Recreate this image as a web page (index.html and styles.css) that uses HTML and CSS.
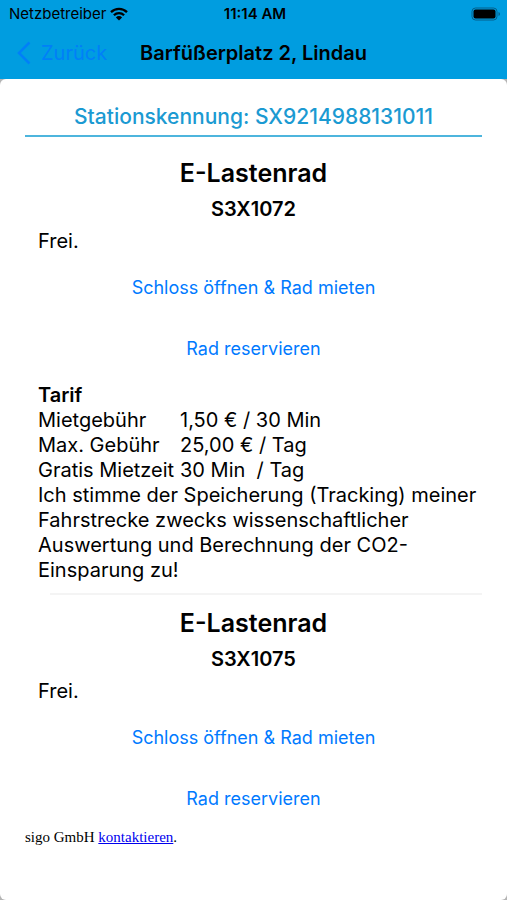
FILE: index.html
```
<!DOCTYPE html>
<html lang="de">
<head>
	<meta charset="utf-8">
	<meta name="viewport" content="width=device-width, initial-scale=1">
	<title>Barfüßerplatz 2, Lindau</title>
	<link rel="stylesheet" href="styles.css">
</head>
<body>
	<header>
		<div class="status-bar">
			<div class="carrier">
				<span>Netzbetreiber</span>
				<svg class="wifi" viewBox="0 0 18 14" aria-hidden="true">
					<path d="M1 5.2a11.5 11.5 0 0 1 16 0M3.9 8.2a7.3 7.3 0 0 1 10.2 0" fill="none" stroke="#000" stroke-width="2.3"/>
					<path d="M9 13.6 5.9 10.4a4.4 4.4 0 0 1 6.2 0z"/>
				</svg>
			</div>
			<span class="clock">11:14 AM</span>
			<svg class="battery" viewBox="0 0 30 14" aria-hidden="true">
				<rect x="1" y="1" width="25" height="12" rx="3.5" fill="none" stroke="#045f8a"/>
				<rect x="2.5" y="2.5" width="22" height="9" rx="2"/>
				<path d="M27.5 5v4q1.5-.6 1.5-2t-1.5-2z" fill="#045f8a"/>
			</svg>
		</div>
		<nav class="nav-bar">
			<button type="button" class="back">
				<svg viewBox="0 0 14 24" aria-hidden="true">
					<path d="M12.5 1.5 2 12l10.5 10.5" fill="none" stroke="currentColor" stroke-width="2.6"/>
				</svg>
				Zurück
			</button>
			<h1>Barfüßerplatz 2, Lindau</h1>
		</nav>
	</header>

	<main>
		<h2 class="station">Stationskennung: SX9214988131011</h2>

		<section class="bike">
			<h3>E-Lastenrad</h3>
			<h4>S3X1072</h4>
			<p class="state">Frei.</p>
			<button type="button" class="action">Schloss öffnen &amp; Rad mieten</button>
			<button type="button" class="action">Rad reservieren</button>
			<div class="tariff">
				<table>
					<caption>Tarif</caption>
					<tbody>
						<tr>
							<th scope="row">Mietgebühr</th>
							<td>1,50 € / 30 Min</td>
						</tr>
						<tr>
							<th scope="row">Max. Gebühr</th>
							<td>25,00 € / Tag</td>
						</tr>
						<tr>
							<th scope="row">Gratis Mietzeit</th>
							<td>30 Min&nbsp; / Tag</td>
						</tr>
					</tbody>
				</table>
				<p>Ich stimme der Speicherung (Tracking) meiner Fahrstrecke zwecks wissenschaftlicher Auswertung und Berechnung der CO2-Einsparung zu!</p>
			</div>
		</section>

		<section class="bike">
			<h3>E-Lastenrad</h3>
			<h4>S3X1075</h4>
			<p class="state">Frei.</p>
			<button type="button" class="action">Schloss öffnen &amp; Rad mieten</button>
			<button type="button" class="action">Rad reservieren</button>
		</section>

		<p class="contact">sigo GmbH <a href="#">kontaktieren</a>.</p>
	</main>
</body>
</html>
```

FILE: styles.css
```
* {
	box-sizing: border-box;
}
body {
	display: flex;
	flex-direction: column;
	min-height: 100vh;
	margin: 0;
	background: linear-gradient(#009de0 79px, #b4b4b4 79px);
	color: #000;
	font-family: Inter, "Liberation Sans", sans-serif;
	font-size: 20px;
	line-height: 25px;
}
h1, h2, h3, h4, p {
	margin: 0;
}
button {
	padding: 0;
	border: 0;
	background: none;
	color: #007aff;
	font-family: inherit;
	cursor: pointer;
}

/* Status bar and navigation */
.status-bar {
	display: grid;
	grid-template-columns: 1fr auto 1fr;
	align-items: center;
	height: 27px;
	padding: 0 6px 0 9px;
	font-size: 15px;
}
.carrier {
	display: flex;
	align-items: center;
	gap: 4px;
}
.wifi {
	width: 18px;
	height: 14px;
}
.clock {
	font-weight: 600;
}
.battery {
	justify-self: end;
	width: 30px;
	height: 14px;
}
.nav-bar {
	display: grid;
	grid-template-columns: 1fr auto 1fr;
	align-items: center;
	height: 52px;
	padding: 0 17px;
}
.nav-bar h1 {
	font-size: 20px;
	font-weight: 600;
}
.back {
	display: flex;
	align-items: center;
	gap: 10px;
	color: #0080f8;
	font-size: 20px;
}
.back svg {
	width: 14px;
	height: 24px;
}

/* Station page */
main {
	flex: 1;
	padding: 25px;
	border-radius: 6px;
	background: #fff;
}
.station {
	margin-bottom: 18px;
	padding-bottom: 6px;
	border-bottom: 2px solid #4db5dd;
	color: #1b9ad2;
	font-size: 21px;
	font-weight: 500;
	text-align: center;
}
.bike {
	padding-left: 13px;
}
.bike h3, .bike h4 {
	margin-left: -13px;
	font-weight: 600;
	line-height: 36px;
	text-align: center;
}
.bike h3 {
	font-size: 25px;
}
.bike h4 {
	font-size: 20px;
}
.state {
	padding: 2px 0 3px;
}
.action {
	display: block;
	width: 100%;
	height: 61px;
	padding-right: 13px;
	font-size: 18px;
}
.tariff {
	position: relative;
	margin-bottom: 10px;
	padding: 4px 0 12px;
}
.tariff::after {
	content: "";
	position: absolute;
	right: 0;
	bottom: 0;
	left: 12px;
	height: 2px;
	background: #f4f4f4;
}
.tariff table {
	border-collapse: collapse;
}
.tariff caption {
	font-weight: 600;
	text-align: left;
}
.tariff th, .tariff td {
	padding: 0;
	font-weight: 400;
	text-align: left;
	white-space: nowrap;
}
.tariff th {
	min-width: 142px;
}
.contact {
	font-family: "Liberation Serif", serif;
	font-size: 15px;
	line-height: 16px;
}
.contact a {
	color: #00e;
}
```
